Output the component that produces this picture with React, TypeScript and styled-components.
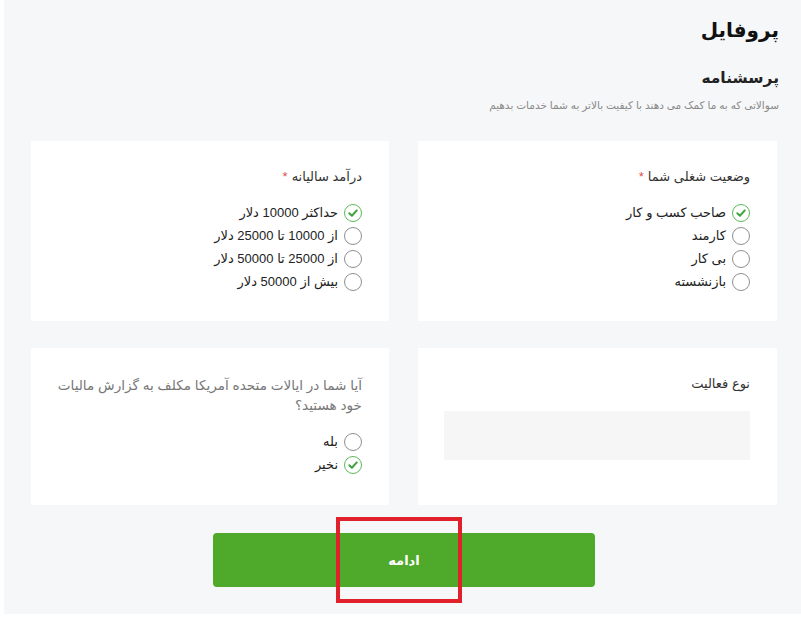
import React, { useState } from "react";
import styled, { createGlobalStyle } from "styled-components";

const GlobalStyle = createGlobalStyle`
  html, body {
    margin: 0;
    padding: 0;
    background: #ffffff;
  }
  body {
    font-family: "Liberation Sans", "DejaVu Sans", sans-serif;
  }
`;

const Page = styled.div`
  direction: rtl;
  margin-left: 4px;
  height: 614px;
  background: #f6f7f9;
  padding: 14px 22px 0 27px;
  box-sizing: border-box;
  color: #222;
`;

const Title = styled.h1`
  margin: 0;
  font-size: 20px;
  font-weight: 700;
  line-height: 32px;
  color: #111;
`;

const SubTitle = styled.h2`
  margin: 19px 0 0;
  font-size: 15.5px;
  font-weight: 700;
  line-height: 26px;
  color: #222;
`;

const Hint = styled.p`
  margin: 6px 0 0;
  font-size: 10.5px;
  line-height: 16px;
  color: #8a8a8a;
`;

const Grid = styled.div`
  display: grid;
  grid-template-columns: 359px 358px;
  grid-template-rows: 180px 157px;
  column-gap: 29px;
  row-gap: 27px;
  margin-top: 28px;
  margin-right: 2px;
`;

const Card = styled.section`
  background: #ffffff;
  padding: 28px 27px 0 22px;
  box-sizing: border-box;
`;

const Label = styled.div<{ $muted?: boolean; $big?: boolean }>`
  font-size: ${(p) => (p.$big ? "13.6px" : "13px")};
  line-height: ${(p) => (p.$big ? "20px" : "16px")};
  color: ${(p) => (p.$muted ? "#777" : "#333")};
`;

const Star = styled.span`
  color: #d9534f;
  margin-right: 4px;
`;

const Options = styled.div<{ $top: number }>`
  display: flex;
  flex-direction: column;
  gap: 5px;
  margin-top: ${(p) => p.$top}px;
`;

const Option = styled.label`
  display: flex;
  align-items: center;
  gap: 6px;
  font-size: 13px;
  line-height: 18px;
  color: #222;
  cursor: pointer;
`;

const Circle = styled.span<{ $on: boolean }>`
  width: 18px;
  height: 18px;
  border-radius: 50%;
  box-sizing: border-box;
  border: 1px solid ${(p) => (p.$on ? "#5cb85c" : "#8f8f8f")};
  display: flex;
  align-items: center;
  justify-content: center;
  flex: none;
`;

const Field = styled.div`
  margin-top: 19px;
  margin-left: 4px;
  height: 49px;
  background: #f6f6f6;
`;

const Footer = styled.div`
  position: relative;
  display: flex;
  justify-content: center;
  margin-top: 28px;
  padding-right: 2px;
`;

const Button = styled.button`
  width: 382px;
  height: 54px;
  border: none;
  border-radius: 4px;
  background: #4fa92b;
  color: #ffffff;
  font-family: "DejaVu Sans", sans-serif;
  font-size: 13px;
  font-weight: 700;
  cursor: pointer;
`;

const Highlight = styled.div`
  position: absolute;
  top: -16px;
  left: 305px;
  width: 126px;
  height: 86px;
  border: 4px solid #e0212b;
  box-sizing: border-box;
  pointer-events: none;
`;

function Check() {
  return (
    <svg width="12" height="12" viewBox="0 0 12 12">
      <path
        d="M2.3 6.2 L4.9 8.7 L9.8 3.4"
        fill="none"
        stroke="#3fa33f"
        strokeWidth="2"
        strokeLinecap="round"
        strokeLinejoin="round"
      />
    </svg>
  );
}

function RadioGroup({ items, initial, top }: { items: string[]; initial: number; top: number }) {
  const [value, setValue] = useState(initial);
  return (
    <Options $top={top}>
      {items.map((text, i) => (
        <Option key={text} onClick={() => setValue(i)}>
          <Circle $on={value === i}>{value === i && <Check />}</Circle>
          {text}
        </Option>
      ))}
    </Options>
  );
}

export default function App() {
  return (
    <>
      <GlobalStyle />
      <Page>
        <Title>پروفایل</Title>
        <SubTitle>پرسشنامه</SubTitle>
        <Hint>سوالاتی که به ما کمک می دهند با کیفیت بالاتر به شما خدمات بدهیم</Hint>
        <Grid>
          <Card>
            <Label>
              وضعیت شغلی شما<Star>*</Star>
            </Label>
            <RadioGroup top={19} initial={0} items={["صاحب کسب و کار", "کارمند", "بی کار", "بازنشسته"]} />
          </Card>
          <Card>
            <Label>
              درآمد سالیانه<Star>*</Star>
            </Label>
            <RadioGroup
              top={19}
              initial={0}
              items={["حداکثر 10000 دلار", "از 10000 تا 25000 دلار", "از 25000 تا 50000 دلار", "بیش از 50000 دلار"]}
            />
          </Card>
          <Card>
            <Label>نوع فعالیت</Label>
            <Field />
          </Card>
          <Card>
            <Label $muted $big>
              آیا شما در ایالات متحده آمریکا مکلف به گزارش مالیات خود هستید؟
            </Label>
            <RadioGroup top={17} initial={1} items={["بله", "نخیر"]} />
          </Card>
        </Grid>
        <Footer>
          <Button>ادامه</Button>
          <Highlight />
        </Footer>
      </Page>
    </>
  );
}
